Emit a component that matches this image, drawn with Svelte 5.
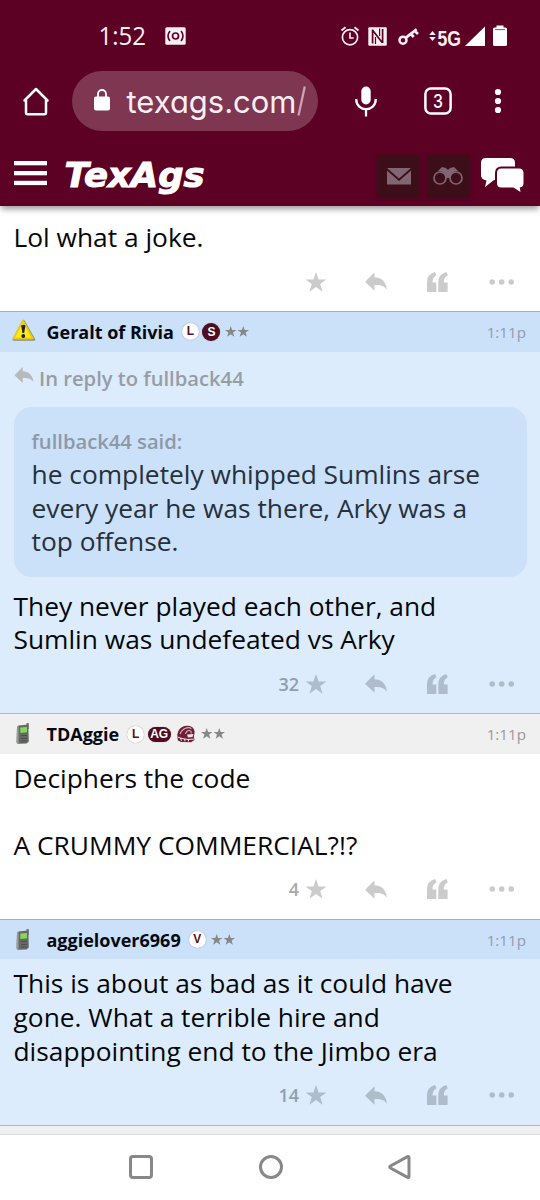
<script>
  const posts = [
    {
      tone: 'plain',
      lines: ['Lol what a joke.'],
      stars: ''
    },
    {
      tone: 'blue',
      icon: 'warning',
      user: 'Geralt of Rivia',
      badges: ['L', 'S'],
      time: '1:11p',
      replyTo: 'In reply to fullback44',
      quote: {
        who: 'fullback44 said:',
        lines: ['he completely whipped Sumlins arse', 'every year he was there, Arky was a', 'top offense.']
      },
      lines: ['They never played each other, and', 'Sumlin was undefeated vs Arky'],
      stars: '32'
    },
    {
      tone: 'plain',
      icon: 'phone',
      user: 'TDAggie',
      badges: ['L', 'AG', 'helmet'],
      time: '1:11p',
      lines: ['Deciphers the code', '', 'A CRUMMY COMMERCIAL?!?'],
      stars: '4'
    },
    {
      tone: 'blue',
      icon: 'phone',
      user: 'aggielover6969',
      badges: ['V'],
      time: '1:11p',
      lines: ['This is about as bad as it could have', 'gone. What a terrible hire and', 'disappointing end to the Jimbo era'],
      stars: '14'
    }
  ];
  const starPath = 'M10.5 0 L13.1 7.4 H21 L14.7 12 L17.1 19.8 L10.5 15.1 L3.9 19.8 L6.3 12 L0 7.4 H7.9 Z';
  const replyPath = 'M0 9.5 L9.5 0 V5 C16 5 21 9 22 17.5 C18.5 13 15 12.8 9.5 12.8 V18.5 Z';
</script>

<div class="screen">
  <header class="top">
    <div class="status">
      <svg width="50" height="26" viewBox="98 23 50 26"><text class="clock" x="98.500" y="45" textLength="47.500" lengthAdjust="spacingAndGlyphs">1:52</text></svg>
      <svg class="cast" width="21" height="18" viewBox="0 0 21 18">
        <rect x=".3" y=".3" width="20.400" height="17.400" rx="1.500" fill="#f8eff5" />
        <circle cx="10.500" cy="9" r="3" fill="none" stroke="#5c0024" stroke-width="1.700" />
        <path d="M5 4 C2.600 7 2.600 11 5 14 M16 4 C18.400 7 18.400 11 16 14" fill="none" stroke="#5c0024" stroke-width="1.600" />
      </svg>
      <svg class="sys" width="170" height="26" viewBox="340 24 170 26" fill="none" stroke="#f8eff5">
        <circle cx="350" cy="37.300" r="7.600" stroke-width="1.700" />
        <path d="M350 32.500 V38 H353.700" stroke-width="1.600" />
        <path d="M341.500 30.600 L345.500 27.300 M358.500 30.600 L354.500 27.300" stroke-width="1.900" />
        <rect x="368.300" y="27.300" width="18.500" height="18.500" rx="1" fill="#f8eff5" stroke="none" />
        <path d="M372.600 29.500 V43.500 M372.600 30.300 L382.200 42.600 M382.600 29 V43" stroke="#5c0024" stroke-width="1.700" />
        <path d="M375.500 44 V37 M379.600 28.500 V36" stroke="#5c0024" stroke-width="1.200" />
        <circle cx="403" cy="40.200" r="3.500" stroke-width="2.500" />
        <path d="M406 37.600 L416.600 29.200 M411 34 L413.700 37 M414.700 31 L418 34" stroke-width="2.700" />
        <path d="M429.200 35 L432.500 31 L435.800 35 Z M429.200 37 L432.500 41 L435.800 37 Z" fill="#f8eff5" stroke="none" />
        <text class="net" x="437.500" y="46.300" textLength="23.500" lengthAdjust="spacingAndGlyphs">5G</text>
        <path d="M465 46 L485 26.500 V46 Z" fill="#fff" stroke="none" />
        <rect x="493" y="27.500" width="14" height="18.500" rx="1.600" fill="#fff" stroke="none" />
        <rect x="496.500" y="25.500" width="7" height="3" fill="#fff" stroke="none" />
        <path d="M495 29.600 H505" stroke="#5c0024" stroke-width=".7" />
      </svg>
    </div>

    <div class="browser">
      <svg class="home" width="28" height="29" viewBox="0 0 28 29" fill="none" stroke="#fff" stroke-width="2.500" stroke-linejoin="round">
        <path d="M2.500 13.500 L14 2 L25.500 13.500 H24 V26 Q24 27.200 22.800 27.200 H5.200 Q4 27.200 4 26 V13.500 Z" />
      </svg>
      <div class="url">
        <svg width="18" height="22" viewBox="0 0 18 22"><rect x="1" y="7.500" width="16" height="14" rx="2" fill="#fff" /><path d="M5 9 V5 A4 4 0 0 1 13 5 V9" fill="none" stroke="#fff" stroke-width="1.800" /></svg>
        <svg class="address" width="184" height="44" viewBox="125 80 184 44">
          <text x="126.500" y="114" textLength="170" lengthAdjust="spacingAndGlyphs">texags.com</text>
          <path d="M298.500 116.500 L304.800 87.500" stroke="#cf9fb5" stroke-width="2.300" fill="none" />
        </svg>
      </div>
      <svg class="mic" width="22" height="31" viewBox="0 0 22 31"><rect x="6.300" y=".5" width="9.400" height="18" rx="4.700" fill="#fff" /><path d="M1.200 13 C1.200 26.500 20.800 26.500 20.800 13 M11 23 V30.500" fill="none" stroke="#fff" stroke-width="2.300" /></svg>
      <svg class="tabs" width="28" height="28" viewBox="0 0 28 28"><rect x="1.400" y="1.400" width="25.200" height="25.200" rx="5.500" fill="none" stroke="#fff" stroke-width="2.500" /><text x="9" y="20.500" textLength="10" lengthAdjust="spacingAndGlyphs">3</text></svg>
      <svg class="dots" width="8" height="26" viewBox="0 0 8 26" fill="#fff"><circle cx="4" cy="4" r="3.100" /><circle cx="4" cy="13" r="3.100" /><circle cx="4" cy="22" r="3.100" /></svg>
    </div>

    <div class="site">
      <svg class="burger" width="33" height="25" viewBox="0 0 33 25" fill="#fff"><rect y="0" width="33" height="4.300" /><rect y="10" width="33" height="4.300" /><rect y="19.800" width="33" height="4.300" /></svg>
      <svg class="logo" width="146" height="40" viewBox="62 156 146 40"><text x="64.500" y="185.800" textLength="140" lengthAdjust="spacingAndGlyphs">TexAgs</text></svg>
      <div class="tile"><svg width="24" height="17" viewBox="0 0 24 17" fill="#806670"><path d="M0 0 H24 L12 10.500 Z" /><path d="M0 2.500 L12 13 L24 2.500 V16.500 H0 Z" /></svg></div>
      <div class="tile"><svg width="30" height="20" viewBox="0 0 30 20" fill="none" stroke="#806670"><circle cx="7" cy="12" r="6" stroke-width="1.700" /><circle cx="23" cy="12" r="6" stroke-width="1.700" /><path d="M5 5 L9 1 L13 2 L15 4 L17 2 L21 1 L25 5 C20 5 17 8 17 12 H13 C13 8 10 5 5 5 Z" fill="#806670" stroke="none" /></svg></div>
      <svg class="chat" width="44" height="36" viewBox="0 0 44 36">
        <path d="M6 1 H30 Q35 1 35 6 V18 Q35 23 30 23 H14 L5 30 L6.500 23.500 Q1 22.500 1 18 V6 Q1 1 6 1 Z" fill="#fff" />
        <path d="M21.500 11.500 H39 Q43.500 11.500 43.500 16 V26 Q43.500 30 39.800 30.500 L40.500 35 L33.500 30.500 H21.500 Q17 30.500 17 26 V16 Q17 11.500 21.500 11.500 Z" fill="#fff" stroke="#5c0024" stroke-width="4" paint-order="stroke" />
      </svg>
    </div>
  </header>

  <main>
    {#each posts as post}
      <article class={post.tone}>
        {#if post.user}
          <div class="head">
            <span class="mood">
              {#if post.icon === 'warning'}
                <svg width="24" height="23" viewBox="0 0 24 23">
                  <path d="M11.500 2 L22 20.500 H1.800 Z" fill="#888d80" stroke="#888d80" stroke-width="2.500" stroke-linejoin="round" />
                  <path d="M11 1.700 L20.800 19.500 H1.500 Z" fill="#ffec16" stroke="#e8ca17" stroke-width="1.800" stroke-linejoin="round" />
                  <path d="M9.200 6.500 Q11.300 4.800 13.400 6.500 L12.200 14 H10.400 Z" fill="#252018" /><circle cx="11.300" cy="17" r="1.900" fill="#252018" />
                </svg>
              {:else}
                <svg width="16" height="23" viewBox="0 0 16 23">
                  <path d="M11.500 1 H13.800 V7 H11.500 Z" fill="#777" />
                  <path d="M3.500 3.500 L13.300 2.500 L13.800 19.500 L11.500 21.500 L3 21.700 Q1.500 21.500 1.600 20 L2 5 Z" fill="#656865" />
                  <path d="M2 5 L3.700 3.500 L3.600 21.600 Q1.500 21.500 1.600 20 Z" fill="#989b98" />
                  <path d="M5.300 5.500 L12 5 V10.300 L5.300 10.900 Z" fill="#82db51" />
                  <path d="M6 13.500 H12 M6 16.500 H12 M6 19 H11.500" stroke="#4c504c" stroke-width=".9" />
                </svg>
              {/if}
            </span>
            <b class="user">{post.user}</b>
            <span class="badges">
              {#each post.badges as badge}
                {#if badge === 'helmet'}
                  <svg width="20" height="18" viewBox="0 0 20 18">
                    <path d="M2 15.500 C-.5 7 4 .5 11.500 .8 C18 1.200 20 6 17.800 11 L18.500 15 L15 17.300 L5 17 Z" fill="#6d2035" />
                    <path d="M4 9 C6.500 3 12 1.500 15.500 3.500 M9.500 9 C10.500 4.500 16.500 4.500 15 8.500" fill="none" stroke="#d9b3bd" stroke-width="1.100" />
                    <path d="M11 9.500 L17.500 9 L16.500 12 L12 12.500 Z" fill="#f1dfe4" />
                    <path d="M1.500 12 L6 13.500 L12 14.500 L18 14 M4.500 13 L5.500 15.800 M8.500 14 L9 16.300 M12.500 14 V16.500" fill="none" stroke="#f1dfe4" stroke-width="1" />
                  </svg>
                {:else}
                  <i class="badge {badge}">{badge}</i>
                {/if}
              {/each}
            </span>
            <svg class="rank" width="24" height="12" viewBox="0 0 44 22" fill="#858789"><path d={starPath} /><path d={starPath} transform="translate(23 0)" /></svg>
            <time>{post.time}</time>
          </div>
        {/if}
        <div class="body">
          {#if post.replyTo}
            <div class="reply"><svg width="20" height="16" viewBox="0 0 22 18.500"><path d={replyPath} /></svg><span>{post.replyTo}</span></div>
          {/if}
          {#if post.quote}
            <blockquote>
              <div class="who">{post.quote.who}</div>
              {#each post.quote.lines as line}<div class="line">{line}</div>{/each}
            </blockquote>
          {/if}
          {#each post.lines as line}<div class="line">{line}</div>{/each}
        </div>
        <div class="actions">
          <span class="count">{post.stars}</span>
          <svg class="a-star" width="22" height="20" viewBox="0 0 21 20"><path d={starPath} /></svg>
          <svg class="a-reply" width="22" height="19" viewBox="0 0 22 18.500"><path d={replyPath} /></svg>
          <svg class="a-quote" width="21" height="20" viewBox="0 0 21 20"><path d="M8 0 L9.500 3.200 Q5.500 5 5.500 10.500 H9.300 V20 H0 V10.500 Q0 2 8 0 Z" /><path d="M19.300 0 L20.800 3.200 Q16.800 5 16.800 10.500 H20.600 V20 H11.300 V10.500 Q11.300 2 19.300 0 Z" /></svg>
          <svg class="a-more" width="26" height="6" viewBox="0 0 26 6"><circle cx="3.200" cy="3" r="2.800" /><circle cx="12.700" cy="3" r="2.800" /><circle cx="22.200" cy="3" r="2.800" /></svg>
        </div>
      </article>
    {/each}
    <div class="peek"></div>
  </main>

  <nav>
    <svg width="24" height="24" viewBox="0 0 24 24"><rect x="1.500" y="1.500" width="21" height="21" rx="2.500" /></svg>
    <svg width="24" height="24" viewBox="0 0 24 24"><circle cx="12" cy="12" r="10.500" /></svg>
    <svg width="24" height="24" viewBox="0 0 24 24"><path d="M2.500 10.900 Q1 12 2.500 13.100 L19.500 22.300 Q21 23 21 21.500 V2.500 Q21 1 19.500 1.700 Z" /></svg>
  </nav>
</div>

<style>
  :global(body) { background: #fff; }
  .screen { width: 540px; height: 1200px; overflow: hidden; display: flex; flex-direction: column; background: #fff; font-family: "Open Sans", sans-serif; }
  svg { display: block; flex: none; overflow: visible; }
  .top { height: 206px; flex: none; background: #5c0024; box-shadow: 0 4px 6px -1px rgba(0, 0, 0, .4); position: relative; }
  .status { height: 72px; padding-left: 98px; display: flex; align-items: center; box-sizing: border-box; }
  .clock { font: 400 26px "Open Sans", sans-serif; fill: #f8eff5; }
  .cast { margin-left: 17px; }
  .sys { margin-left: 154px; margin-top: 2px; }
  .net { font: 700 22.500px "Liberation Sans", sans-serif; fill: #f8eff5; stroke: none; }
  .browser { height: 60px; display: flex; align-items: center; padding-left: 22px; margin-top: -1px; }
  .url { width: 246px; height: 60px; border-radius: 30px; background: #7e3651; margin-left: 22px; display: flex; align-items: center; padding-left: 21px; box-sizing: border-box; }
  .url svg:first-child { margin-top: -2px; }
  .address { margin-left: 14px; }
  .address text { font: 400 31px Inter, sans-serif; font-feature-settings: "cv11"; fill: #f8eff5; }
  .mic { margin-left: 37px; }
  .tabs { margin-left: 47px; }
  .tabs text { font: 500 19px Inter, sans-serif; fill: #fff; }
  .dots { margin-left: 42px; }
  .site { height: 75px; display: flex; align-items: center; padding-left: 14px; box-sizing: border-box; }
  .burger { margin-top: 10px; }
  .logo { margin: 16px 0 0 15px; }
  .logo text { font: italic 700 33px "DejaVu Sans", sans-serif; fill: #fff; stroke: #fff; stroke-width: 1; }
  .tile { width: 43px; height: 43px; margin: 15px 0 0 169px; background: #3c0e1a; display: flex; align-items: center; justify-content: center; box-shadow: 0 0 3px #3c0e1a; }
  .tile + .tile { margin-left: 6.500px; }
  .chat { margin: 13px 0 0 10.500px; }

  main { height: 928.300px; flex: none; overflow: hidden; }
  .body { padding: 8px 13.500px 0; }
  article:first-child .body { padding-top: 15.200px; }
  .plain { background: #fff; --icon: #cbcbcb; --count: #a9a9a9; }
  .blue { background: #dcecfc; --icon: #afbdca; --count: #929eaa; }
  .head { height: 40.500px; box-sizing: border-box; border-top: 1.500px solid #b4b7ba; background: #f0f0f0; display: flex; align-items: center; padding: 0 14px 0 9px; }
  .blue .head { background: #cbe0f9; border-top-color: #9eb2c6; }
  .mood { width: 37.500px; flex: none; display: flex; }
  .mood svg { margin-left: 3px; margin-top: -3px; }
  .mood svg[width="16"] { margin-left: 6px; margin-top: -1px; }
  .user { font-size: 18px; line-height: 24px; white-space: nowrap; color: #060a10; }
  .badges { display: flex; gap: 3.500px; margin: 0 5px 0 8px; align-items: center; }
  .badge { height: 17px; min-width: 17px; box-sizing: border-box; border-radius: 9px; background: #fff; color: #5b1023; font: 700 12px/17px "Liberation Sans", sans-serif; text-align: center; box-shadow: 0 0 1px #8d7d87; }
  .S, .AG { background: #500c20; color: #fff; }
  .S { min-width: 18px; height: 18px; line-height: 18px; }
  .AG { width: 23px; height: 15px; line-height: 15px; }
  .badges svg { margin-left: 2px; }
  time { margin-left: auto; font-size: 15.200px; color: #999; }
  .blue time { color: #919dab; }
  .line { height: 33.550px; line-height: 33.550px; font-size: 26.330px; white-space: pre; color: #050709; font-variant-ligatures: none; }
  .reply { height: 36px; display: flex; align-items: center; color: #979da4; font-size: 20.200px; font-weight: 600; }
  .reply svg { fill: #b7b9bd; margin-right: 5.500px; margin-top: -5px; }
  blockquote { margin: 11px 0 12.700px; height: 170.300px; box-sizing: border-box; padding: 20.500px 18px 0; border-radius: 18px; background: #cbe0f9; }
  blockquote .line { color: #26313d; }
  .who { height: 31px; line-height: 28px; font-size: 20.200px; font-weight: 600; color: #8e99a6; }
  .actions { height: 56.500px; box-sizing: border-box; padding-bottom: 2.500px; display: flex; align-items: center; fill: var(--icon); }
  .count { width: 299px; text-align: right; font-size: 18px; font-weight: 600; color: var(--count); }
  .a-star { margin-left: 6px; }
  .a-reply { margin-left: 38px; }
  .a-quote { margin-left: 40px; }
  .a-more { margin-left: 41px; }
  .peek { height: 12px; border-top: 1.500px solid #b4b7ba; background: #f0f0f0; }
  nav { flex: 1; border-top: 1px solid #dcdcdc; background: #fff; display: flex; align-items: center; justify-content: space-between; padding: 0 128px 2px 129px; }
  nav svg { fill: none; stroke: #888; stroke-width: 3; }
</style>
